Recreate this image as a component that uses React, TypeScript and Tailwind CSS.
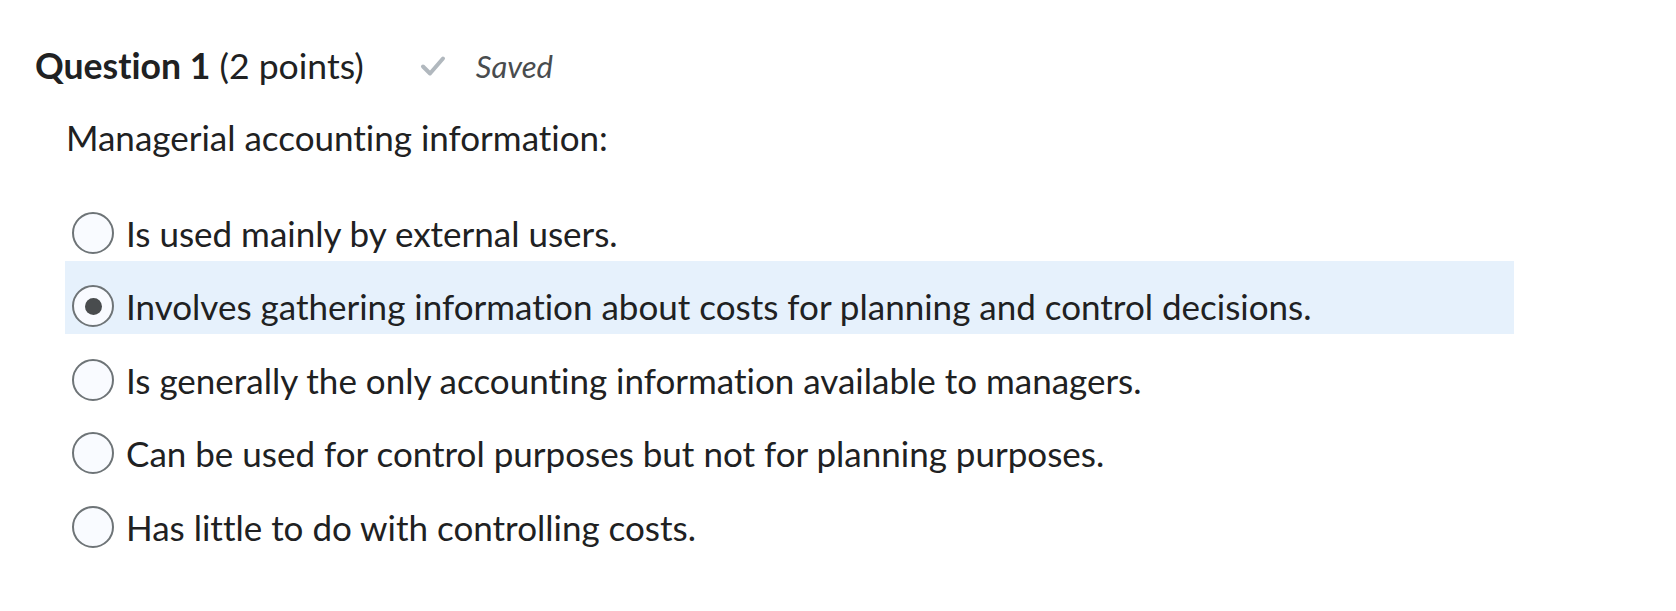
import React from 'react';

const options = [
  'Is used mainly by external users.',
  'Involves gathering information about costs for planning and control decisions.',
  'Is generally the only accounting information available to managers.',
  'Can be used for control purposes but not for planning purposes.',
  'Has little to do with controlling costs.',
];

function Radio({ checked }: { checked: boolean }) {
  return (
    <span className="flex h-[42px] w-[42px] shrink-0 items-center justify-center rounded-full border-2 border-[#6e7477] bg-[#f9fbff]">
      {checked && <span className="h-[17px] w-[17px] rounded-full bg-[#494c4e]" />}
    </span>
  );
}

export default function App() {
  const selected = 1;

  return (
    <div className="min-h-[611px] w-full bg-white font-['Lato',sans-serif] text-[#202122] [font-variant-ligatures:none]">
      <div className="pl-[35px] pt-[42px]">
        <div className="flex items-center">
          <h2 className="text-[35.6px] leading-[48px]">
            <span className="font-bold">Question 1</span> (2 points)
          </h2>
          <div className="ml-[56px] flex items-center gap-[30px] text-[#494c4e]">
            <svg width="26" height="22" viewBox="0 0 26 22" fill="none">
              <path d="M3 11.5 L10 18.5 L23 3.5" stroke="#b1b8be" strokeWidth="4" strokeLinecap="round" strokeLinejoin="round" />
            </svg>
            <span className="text-[31px] italic leading-[48px]">Saved</span>
          </div>
        </div>

        <div className="pl-[31px] pt-[23px]">
          <p className="text-[35px] leading-[48px]">Managerial accounting information:</p>
        </div>

        <div className="w-[1479px] pl-[30px] pt-[26px]">
          {options.map((text, i) => (
            <label
              key={i}
              className={`flex h-[73.5px] items-center gap-[12px] pl-[7px] pt-[18px] ${i === selected ? 'bg-[#e6f1fc]' : ''}`}
            >
              <Radio checked={i === selected} />
              <span className="text-[35px] leading-[42px]">{text}</span>
            </label>
          ))}
        </div>
      </div>
    </div>
  );
}
